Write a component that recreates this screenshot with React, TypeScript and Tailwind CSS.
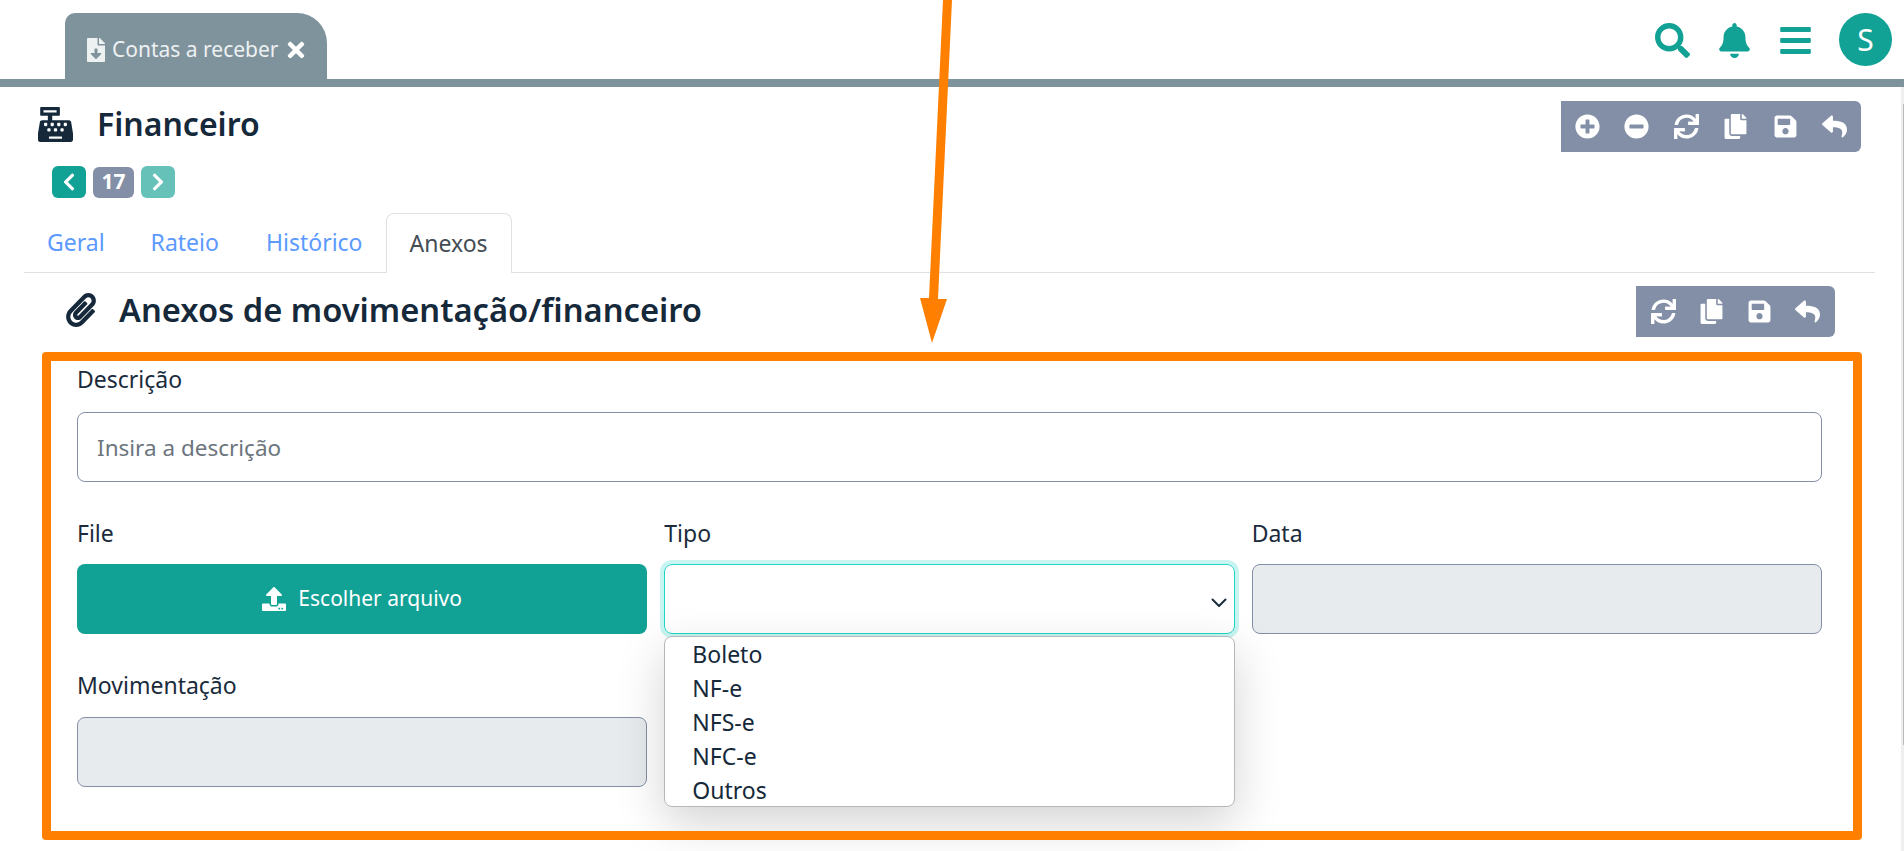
import { FaBars, FaBell, FaCashRegister, FaChevronLeft, FaChevronRight, FaCopy, FaFileDownload, FaMinusCircle, FaPaperclip, FaPlusCircle, FaReply, FaSave, FaSearch, FaSync, FaTimes, FaUpload } from "react-icons/fa";

const font = "font-['Noto_Sans','Open_Sans',sans-serif]";

function Toolbar({ compact }: { compact?: boolean }) {
  return (
    <div className={`flex items-center justify-between h-[51px] bg-[#838fa6] rounded-r-md text-white text-[25px] ${compact ? "w-[199px] px-[15px]" : "w-[300px] px-[14px]"}`}>
      {!compact && <FaPlusCircle />}
      {!compact && <FaMinusCircle />}
      <FaSync />
      <FaCopy />
      <FaSave />
      <FaReply />
    </div>
  );
}

function Field({ label, className, children }: { label: string; className?: string; children: React.ReactNode }) {
  return (
    <div className={className}>
      <label className="block h-[31px] leading-[31px] text-[#1a2b3c]">{label}</label>
      {children}
    </div>
  );
}

const disabledInput = "h-[70px] rounded-lg border border-[#838fa6] bg-[#e8ebee]";

export default function App() {
  return (
    <div className={`relative h-[851px] overflow-hidden bg-white text-[23px] ${font}`}>
      {/* Top bar */}
      <header className="flex h-[87px] items-start border-b-8 border-[#7f939d] pr-[12px]">
        <div className="ml-[65px] mt-[13px] flex h-[66px] w-[262px] items-center rounded-tl-[10px] rounded-tr-[30px] bg-[#7f939d] pl-[19px] pt-[8px] text-white">
          <FaFileDownload className="shrink-0 text-[24px] text-[#eef1f2]" />
          <span className="ml-[4px] w-[168px] overflow-hidden whitespace-nowrap text-[21px] text-[#eef1f2]">Contas a receber</span>
          <FaTimes className="ml-[4px] shrink-0 text-[24px]" />
        </div>
        <div className="ml-auto mt-[13px] flex items-center text-[#12a195]">
          <FaSearch className="mt-[1px] text-[35px]" />
          <FaBell className="ml-[27px] mt-[1px] text-[35px]" />
          <FaBars className="ml-[26px] mt-[1px] text-[35px]" />
          <div className="ml-[26px] flex h-[53px] w-[53px] items-center justify-center rounded-full bg-[#12a195] text-[30px] text-white">S</div>
        </div>
      </header>

      {/* Page title */}
      <div className="flex justify-between pl-[38px] pr-[43px] pt-[14px]">
        <div>
          <div className="flex items-center text-[#15293a]">
            <FaCashRegister className="text-[35px]" />
            <h1 className="ml-[24px] text-[32px] font-semibold leading-[46px]">Financeiro</h1>
          </div>
          <div className="ml-[14px] mt-[19px] flex items-center gap-[7px] text-white">
            <button className="flex h-[32px] w-[34px] items-center justify-center rounded-md bg-[#12a195] text-[20px]"><FaChevronLeft /></button>
            <span className="flex h-[31px] w-[41px] items-center justify-center rounded-md bg-[#838fa6] text-[21px] font-bold">17</span>
            <button className="flex h-[32px] w-[34px] items-center justify-center rounded-md bg-[#66c1b8] text-[20px]"><FaChevronRight /></button>
          </div>
        </div>
        <Toolbar />
      </div>

      {/* Tabs */}
      <nav className="ml-[24px] mr-[29px] mt-[15px] flex h-[60px] border-b border-[#dee2e6] text-[#5c9aff]">
        <a className="flex items-center px-[23px]">Geral</a>
        <a className="flex items-center px-[23px]">Rateio</a>
        <a className="flex items-center pl-[24px] pr-[23px]">Histórico</a>
        <a className="mb-[-1px] flex items-center rounded-t-lg border border-b-0 border-[#dee2e6] bg-white px-[23px] text-[#444c54]">Anexos</a>
      </nav>

      {/* Section title */}
      <div className="flex items-center justify-between pl-[64px] pr-[69px] pt-[12px]">
        <div className="mb-[4px] flex items-center text-[#15293a]">
          <FaPaperclip className="text-[34px]" />
          <h2 className="ml-[21px] text-[32.7px] font-semibold">Anexos de movimentação/financeiro</h2>
        </div>
        <Toolbar compact />
      </div>

      {/* Form */}
      <form className="pl-[77px] pr-[82px] pt-[26px]">
        <Field label="Descrição">
          <input placeholder="Insira a descrição" className="mt-[17px] h-[70px] w-full rounded-lg border border-[#838fa6] px-[19px] text-[22.5px] text-[#1a2b3c] placeholder:text-[#6c757d]" />
        </Field>
        <div className="mt-[36px] grid grid-cols-3 gap-x-[17px]">
          <Field label="File">
            <button type="button" className="mt-[15px] flex h-[70px] w-full items-center justify-center gap-[12px] rounded-lg bg-[#12a195] text-[21px] text-white">
              <FaUpload className="text-[24px]" /> Escolher arquivo
            </button>
          </Field>
          <Field label="Tipo" className="relative z-10">
            <div className="mt-[15px] flex h-[70px] items-center justify-end rounded-lg border border-[#20d6c7] pr-[7px] pt-[7px] ring-4 ring-[#c8f5f1]">
              <svg width="16" height="10" viewBox="0 0 16 10" fill="none" stroke="#1a2b3c" strokeWidth="2" strokeLinecap="round" strokeLinejoin="round">
                <path d="M1.5 1.5 8 8l6.5-6.5" />
              </svg>
            </div>
            <ul className="mt-[2px] h-[171px] overflow-hidden rounded-lg border border-[#b5b8bb] bg-white pl-[27px] text-[#15293a] shadow-[0_16px_48px_rgba(0,0,0,0.175)]">
              {["Boleto", "NF-e", "NFS-e", "NFC-e", "Outros"].map((o) => (
                <li key={o} className="h-[34px] leading-[34px]">{o}</li>
              ))}
            </ul>
          </Field>
          <Field label="Data">
            <div className={`mt-[15px] ${disabledInput}`} />
          </Field>
        </div>
        <Field label="Movimentação" className="mt-[-137px] w-[570px]">
          <div className={`mt-[16px] ${disabledInput}`} />
        </Field>
      </form>

      {/* Scrollbar */}
      <div className="absolute bottom-0 right-0 top-[87px] w-[3px] bg-[#eeeeee] pl-[2px] pt-[17px]">
        <div className="h-[641px] w-[1px] bg-[#bbbbbb]" />
      </div>

      {/* Annotation */}
      <div className="absolute left-[42px] top-[352px] z-20 h-[488px] w-[1820px] rounded border-[9px] border-[#ff8000]" />
      <svg className="absolute left-0 top-0 z-20" width="1904" height="851">
        <polygon points="943,0 952,0 938,299 947,299 932,343 920,298 929,298" fill="#ff8000" />
      </svg>
    </div>
  );
}
